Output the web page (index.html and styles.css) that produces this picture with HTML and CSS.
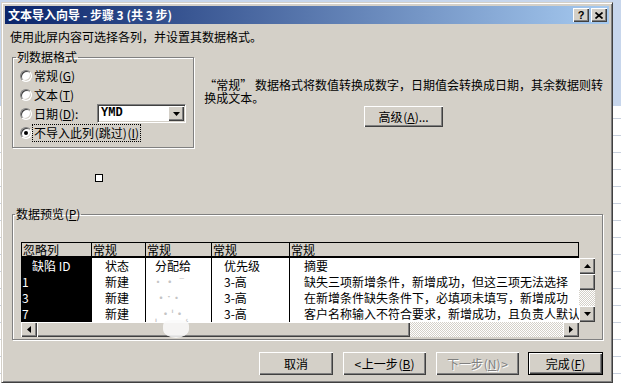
FILE: index.html
```html
<!DOCTYPE html>
<html lang="zh-CN">
<head>
    <meta charset="UTF-8">
    <title>文本导入向导 - 步骤 3 (共 3 步)</title>
    <link rel="stylesheet" href="styles.css">
</head>
<body>
    <div class="dialog">
        <div class="titlebar">
            <span class="title">文本导入向导 - 步骤 3 (共 3 步)</span>
            <span class="cap-btn help">?</span>
            <span class="cap-btn close">
                <svg width="8" height="7" viewBox="0 0 8 7"><path d="M0.5 0.5L7.5 6.5M7.5 0.5L0.5 6.5" stroke="#000" stroke-width="1.7"/></svg>
            </span>
        </div>

        <p class="intro">使用此屏内容可选择各列，并设置其数据格式。</p>

        <div class="format-row">
            <fieldset class="group format-group">
                <legend>列数据格式</legend>
                <div class="radio-row"><span class="radio"></span><span class="label">常规 (<u>G</u>)</span></div>
                <div class="radio-row"><span class="radio"></span><span class="label">文本 (<u>T</u>)</span></div>
                <div class="radio-row">
                    <span class="radio"></span><span class="label date-label">日期 (<u>D</u>):</span>
                    <div class="combo">
                        <span class="combo-value">YMD</span>
                        <span class="combo-arrow raised">
                            <svg width="7" height="4" viewBox="0 0 7 4"><polygon points="0,0 7,0 3.5,4" fill="#000"/></svg>
                        </span>
                    </div>
                </div>
                <div class="radio-row"><span class="radio checked"></span><span class="label focus">不导入此列 (跳过) (<u>I</u>)</span></div>
            </fieldset>

            <div class="desc">
                <p class="desc-line">“常规” 数据格式将数值转换成数字，日期值会转换成日期，其余数据则转</p>
                <p class="desc-line">换成文本。</p>
                <button class="btn advanced">高级 (<u>A</u>)...</button>
            </div>
        </div>

        <div class="handle"></div>

        <fieldset class="group preview-group">
            <legend>数据预览 (<u>P</u>)</legend>
            <div class="preview">
                <div class="table">
                    <div class="th first">忽略列</div>
                    <div class="th">常规</div>
                    <div class="th">常规</div>
                    <div class="th">常规</div>
                    <div class="th">常规</div>

                    <div class="td c1 c1-head">缺陷 ID</div>
                    <div class="td c2">状态</div>
                    <div class="td c3">分配给</div>
                    <div class="td c4">优先级</div>
                    <div class="td c5">摘要</div>

                    <div class="td c1">1</div>
                    <div class="td c2">新建</div>
                    <div class="td c3"><span class="smudge">˙  ·ˉ</span></div>
                    <div class="td c4">3-高</div>
                    <div class="td c5">缺失三项新增条件，新增成功，但这三项无法选择</div>

                    <div class="td c1">3</div>
                    <div class="td c2">新建</div>
                    <div class="td c3"><span class="smudge">·ˑ    ˙</span></div>
                    <div class="td c4">3-高</div>
                    <div class="td c5">在新增条件缺失条件下，必填项未填写，新增成功</div>

                    <div class="td c1">7</div>
                    <div class="td c2">新建</div>
                    <div class="td c3"><span class="smudge">ˌ ·ˈ·˛</span></div>
                    <div class="td c4">3-高</div>
                    <div class="td c5">客户名称输入不符合要求，新增成功，且负责人默认</div>
                </div>

                <div class="vscroll">
                    <span class="sb-btn raised">
                        <svg width="7" height="4" viewBox="0 0 7 4"><polygon points="0,4 7,4 3.5,0" fill="#000"/></svg>
                    </span>
                    <span class="sb-thumb raised"></span>
                    <span class="sb-track"></span>
                    <span class="sb-btn raised">
                        <svg width="7" height="4" viewBox="0 0 7 4"><polygon points="0,0 7,0 3.5,4" fill="#000"/></svg>
                    </span>
                </div>

                <div class="hscroll">
                    <span class="sb-btn raised">
                        <svg width="4" height="7" viewBox="0 0 4 7"><polygon points="4,0 4,7 0,3.5" fill="#000"/></svg>
                    </span>
                    <span class="sb-thumb raised h-thumb"></span>
                    <span class="sb-track"></span>
                    <span class="sb-btn raised">
                        <svg width="4" height="7" viewBox="0 0 4 7"><polygon points="0,0 0,7 4,3.5" fill="#000"/></svg>
                    </span>
                </div>

                <div class="corner"></div>

                <!-- smear left over in the capture -->
                <div class="blur-spot"></div>
            </div>
        </fieldset>

        <div class="actions">
            <button class="btn cancel">取消</button>
            <button class="btn back">&lt; 上一步 (<u>B</u>)</button>
            <button class="btn next" disabled>下一步 (<u>N</u>) &gt;</button>
            <button class="btn finish">完成 (<u>F</u>)</button>
        </div>
    </div>
</body>
</html>
```

FILE: styles.css
```css
body {
    margin: 0;
    height: 384px;
    overflow: hidden;
    font-family: "Noto Sans CJK SC", "Noto Sans", sans-serif;
    font-size: 12px;
    color: #000;
    background:
        linear-gradient(#c7d6ec 0, #c7d6ec 106px, transparent 106px),
        repeating-linear-gradient(#fff 0, #fff 16px, #c9d1de 16px, #c9d1de 17px);
}

.dialog {
    box-sizing: border-box;
    width: 612px;
    height: 381px;
    margin: 2px 0 0 1px;
    padding: 3px;
    background: #d4d0c8;
    border: 1px solid;
    border-color: #d4d0c8 #404040 #404040 #d4d0c8;
    box-shadow: inset 1px 1px #fff, inset -1px -1px #808080;
}

/* Title bar */
.titlebar {
    display: flex;
    align-items: center;
    height: 18px;
    padding: 0 2px 0 3px;
    background: linear-gradient(to right, #0a246a, #a6caf0);
    color: #fff;
}

.title {
    flex: 1;
    font-weight: bold;
    line-height: 18px;
    white-space: nowrap;
}

.cap-btn {
    box-sizing: border-box;
    display: flex;
    align-items: center;
    justify-content: center;
    width: 16px;
    height: 14px;
    background: #d4d0c8;
    color: #000;
    box-shadow: inset 1px 1px #fff, inset -1px -1px #404040, inset -2px -2px #808080;
}

.help {
    margin-right: 2px;
    font: bold 11px "Liberation Sans", sans-serif;
    line-height: 14px;
}

.raised {
    background: #d4d0c8;
    box-shadow: inset 1px 1px #fff, inset -1px -1px #404040, inset -2px -2px #808080;
}

.intro {
    margin: 6px 0 0 5px;
    line-height: 14px;
}

/* Group boxes */
.group {
    margin: 0;
    min-width: 0;
    border: 1px solid #808080;
    box-shadow: inset 1px 1px #fff, 1px 1px #fff;
}

.group legend {
    padding: 0 1px;
    line-height: 14px;
}

.format-row {
    display: flex;
    margin: 6px 0 0 7px;
}

.format-group {
    box-sizing: border-box;
    width: 183px;
    padding: 2px 0 5px 7px;
}

.format-group legend {
    margin-left: -4px;
}

.radio-row {
    display: flex;
    align-items: center;
    height: 19px;
}

.radio {
    box-sizing: border-box;
    display: flex;
    align-items: center;
    justify-content: center;
    flex: none;
    width: 12px;
    height: 12px;
    border-radius: 50%;
    border: 1px solid;
    border-color: #808080 #fff #fff #808080;
    background: #fff;
    box-shadow: inset 1px 1px #404040, inset -1px -1px #d4d0c8;
}

.radio.checked::after {
    content: "";
    width: 4px;
    height: 4px;
    border-radius: 50%;
    background: #000;
}

.label {
    margin-left: 2px;
    line-height: 16px;
    white-space: nowrap;
    word-spacing: -2px;
}

.date-label {
    width: 63px;
}

.focus {
    margin-left: 0;
    padding: 0 1px;
    border: 1px dotted #000;
}

.combo {
    box-sizing: border-box;
    display: flex;
    width: 89px;
    height: 19px;
    padding: 1px;
    border: 1px solid;
    border-color: #808080 #fff #fff #808080;
    background: #fff;
    box-shadow: inset 1px 1px #404040, inset -1px -1px #d4d0c8;
}

.combo-value {
    flex: 1;
    padding-left: 2px;
    font: bold 12px "Liberation Mono", monospace;
    line-height: 15px;
}

.combo-arrow {
    display: flex;
    align-items: center;
    justify-content: center;
    width: 16px;
    height: 15px;
}

.desc {
    flex: 1;
    display: flex;
    flex-direction: column;
    align-items: center;
    margin: 0 6px 0 10px;
    padding-top: 28px;
}

.desc-line {
    align-self: stretch;
    height: 13px;
    margin: 0;
    font-size: 12px;
    line-height: 13px;
    white-space: nowrap;
    overflow: visible;
}

/* Buttons */
.btn {
    box-sizing: border-box;
    height: 23px;
    padding: 0;
    border: none;
    background: #d4d0c8;
    font: inherit;
    line-height: 14px;
    color: #000;
    word-spacing: -2px;
    box-shadow: inset 1px 1px #fff, inset -1px -1px #404040, inset -2px -2px #808080;
}

.btn:disabled {
    color: #808080;
    text-shadow: 1px 1px #fff;
}

.advanced {
    width: 79px;
    height: 21px;
    margin-top: 2px;
}

.handle {
    box-sizing: border-box;
    width: 8px;
    height: 8px;
    margin: 26px 0 0 90px;
    border: 1px solid #000;
    background: #fff;
}

/* Data preview */
.preview-group {
    box-sizing: border-box;
    width: 591px;
    margin: 25px 0 0 7px;
    padding: 21px 7px 2px 8px;
}

.preview-group legend {
    margin-left: -6px;
    word-spacing: -2px;
}

.preview {
    position: relative;
    display: grid;
    grid-template-columns: 558px 16px;
    grid-template-rows: 16px 64px 15px;
}

.table {
    grid-column: 1;
    grid-row: 1 / 3;
    display: grid;
    grid-template-columns: 71px 54px 66px 78px 289px;
    grid-auto-rows: 16px;
    background: #fff;
    overflow: hidden;
}

.th {
    box-sizing: border-box;
    padding-left: 1px;
    background: #d4d0c8;
    border-top: 1px solid #000;
    border-bottom: 2px solid #000;
    border-right: 1px solid #000;
    line-height: 13px;
}

.th.first {
    border-left: 1px solid #000;
}

.td {
    box-sizing: border-box;
    line-height: 16px;
    white-space: nowrap;
    overflow: hidden;
}

.c1 {
    background: #000;
    color: #fff;
    padding-left: 1px;
}

.c1-head {
    padding-left: 11px;
}

.c2 {
    padding-left: 13px;
    border-right: 1px solid #000;
}

.c3 {
    padding-left: 9px;
    border-right: 1px solid #000;
}

.c4 {
    padding-left: 12px;
    border-right: 1px solid #000;
}

.c5 {
    padding-left: 14px;
}

.smudge {
    color: #c4c4c4;
}

.vscroll {
    grid-column: 2;
    grid-row: 2;
    display: flex;
    flex-direction: column;
}

.hscroll {
    grid-column: 1;
    grid-row: 3;
    display: flex;
}

.sb-btn {
    display: flex;
    align-items: center;
    justify-content: center;
    flex: none;
    width: 16px;
    height: 16px;
}

.hscroll .sb-btn {
    height: 15px;
}

.sb-thumb {
    flex: none;
    width: 16px;
    height: 16px;
}

.h-thumb {
    width: 373px;
    height: 15px;
}

.sb-track {
    flex: 1;
    background: repeating-conic-gradient(#fff 0 25%, #d4d0c8 0 50%) 0 0 / 2px 2px;
}

.corner {
    grid-column: 2;
    grid-row: 3;
    background: #d4d0c8;
}

.blur-spot {
    position: absolute;
    left: 142px;
    top: 78px;
    width: 26px;
    height: 18px;
    border-radius: 30% 30% 50% 50%;
    background: #fafafa;
    opacity: 0.85;
}

.actions {
    display: flex;
    justify-content: flex-end;
    margin: 12px 6px 0 0;
}

.cancel {
    width: 74px;
}

.back {
    width: 83px;
    margin-left: 10px;
}

.next {
    width: 83px;
    margin-left: 10px;
}

.finish {
    width: 75px;
    margin-left: 9px;
    border: 1px solid #000;
}
```
